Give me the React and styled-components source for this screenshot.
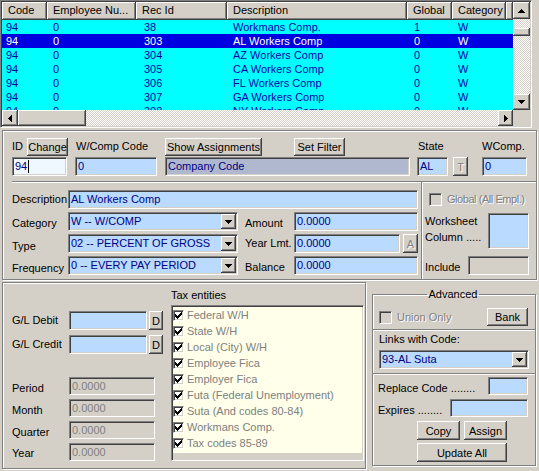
import React from "react";
import styled, { createGlobalStyle, css } from "styled-components";

const GlobalStyle = createGlobalStyle`
  html, body {
    margin: 0;
    padding: 0;
    background: #d4d0c8;
  }
  body {
    font-family: "Liberation Sans", Arial, sans-serif;
    font-size: 11px;
    color: #000;
  }
`;

const raised = css`
  background: #d4d0c8;
  box-shadow: inset -1px -1px #404040, inset 1px 1px #fff,
    inset -2px -2px #808080;
`;

const sunken = css`
  border: 1px solid;
  border-color: #808080 #fff #fff #808080;
  box-shadow: inset 1px 1px #404040, inset -1px -1px #d4d0c8;
`;

const checker = css`
  background-color: #fff;
  background-image: repeating-conic-gradient(#d4d0c8 0 25%, #fff 0 50%);
  background-size: 2px 2px;
`;

const Window = styled.div`
  width: 539px;
  height: 471px;
  overflow: hidden;
  display: flex;
  flex-direction: column;
  background: #d4d0c8;
`;

/* ---------- data grid ---------- */

const GridFrame = styled.div`
  box-sizing: border-box;
  width: 532px;
  height: 128px;
  padding: 1px;
  ${sunken};
  display: grid;
  grid-template-columns: 511px 17px;
  grid-template-rows: 108px 16px;
`;

const TableArea = styled.div`
  overflow: hidden;
  background: #00ffff;
`;

const HeaderRow = styled.div`
  display: flex;
  height: 18px;
  background: #d4d0c8;
`;

const HeaderCell = styled.div`
  box-sizing: border-box;
  flex: none;
  width: ${(p) => p.$w}px;
  height: 18px;
  padding-left: 6px;
  line-height: 17px;
  white-space: nowrap;
  overflow: hidden;
  ${raised};
`;

const DataRow = styled.div`
  display: flex;
  height: 14px;
  line-height: 14px;
  background: ${(p) => (p.$selected ? "#0000e0" : "#00ffff")};
  color: ${(p) => (p.$selected ? "#fff" : "#0000a8")};
`;

const DataCell = styled.div`
  flex: none;
  box-sizing: border-box;
  width: ${(p) => p.$w}px;
  padding-left: ${(p) => p.$pl || 6}px;
  white-space: nowrap;
  overflow: hidden;
`;

const VScroll = styled.div`
  display: flex;
  flex-direction: column;
`;

const HScroll = styled.div`
  display: flex;
`;

const ScrollBtn = styled.div`
  box-sizing: border-box;
  flex: none;
  width: ${(p) => p.$w || 17}px;
  height: ${(p) => p.$h || 16}px;
  display: flex;
  align-items: center;
  justify-content: center;
  ${raised};
`;

const Thumb = styled.div`
  flex: none;
  width: ${(p) => (p.$w ? `${p.$w}px` : "auto")};
  height: ${(p) => (p.$h ? `${p.$h}px` : "auto")};
  ${raised};
`;

const Track = styled.div`
  flex: ${(p) => (p.$size ? `0 0 ${p.$size}px` : "1")};
  ${checker};
`;

const Corner = styled.div`
  background: #d4d0c8;
`;

/* ---------- panels ---------- */

const etched = css`
  border: 1px solid #808080;
  box-shadow: inset 1px 1px #fff, 1px 1px #fff;
`;

const MidPanel = styled.div`
  box-sizing: border-box;
  width: 535px;
  height: 150px;
  margin: 2px 0 0 2px;
  ${etched};
  display: flex;
  flex-direction: column;
`;

const TopArea = styled.div`
  box-sizing: border-box;
  height: 50px;
  padding: 6px 0 0 9px;
  display: flex;
  align-items: flex-start;
`;

const Group = styled.div`
  display: flex;
  flex-direction: column;
  margin-left: ${(p) => p.$ml || 0}px;
`;

const TopRow = styled.div`
  display: flex;
  align-items: center;
  height: 19px;
  margin-bottom: 1px;
`;

const LowerArea = styled.div`
  flex: 1;
  margin-left: 9px;
  display: flex;
  border-top: 1px solid #808080;
  box-shadow: inset 0 1px #fff;
`;

const LowerLeft = styled.div`
  width: 409px;
  padding-top: 8px;
  display: flex;
  flex-direction: column;
`;

const LowerRight = styled.div`
  flex: 1;
  min-width: 0;
  padding: 11px 0 0 3px;
  border-left: 1px solid #808080;
  box-shadow: inset 1px 1px #fff;
  display: flex;
  flex-direction: column;
`;

const FormRow = styled.div`
  display: flex;
  align-items: ${(p) => p.$align || "center"};
  height: ${(p) => (p.$h ? `${p.$h}px` : "auto")};
  margin-top: ${(p) => p.$mt || 0}px;
  margin-left: ${(p) => p.$ml || 0}px;
`;

const Spacer = styled.div`
  flex: 1;
`;

const Label = styled.span`
  flex: none;
  width: ${(p) => (p.$w ? `${p.$w}px` : "auto")};
  margin-left: ${(p) => p.$ml || 0}px;
  padding-top: ${(p) => (p.$dy || 0) * 2}px;
  white-space: nowrap;
  line-height: ${(p) => p.$lh || 13}px;
  letter-spacing: ${(p) => p.$ls || 0}px;
  color: ${(p) => (p.$disabled ? "#808080" : "#000")};
  text-shadow: ${(p) => (p.$disabled ? "1px 1px #fff" : "none")};
`;

const Field = styled.div`
  box-sizing: border-box;
  flex: none;
  width: ${(p) => p.$w}px;
  height: ${(p) => p.$h || 19}px;
  margin-left: ${(p) => p.$ml || 0}px;
  padding: 1px 1px 1px 2px;
  ${sunken};
  background: ${(p) => p.$bg || "#badaff"};
  color: ${(p) => p.$fg || "#000080"};
  line-height: ${(p) => (p.$h || 19) - 4}px;
  white-space: nowrap;
  overflow: hidden;
  display: flex;
  align-items: center;
`;

const FieldText = styled.span`
  flex: 1;
  overflow: hidden;
`;

const Caret = styled.span`
  display: inline-block;
  width: 1px;
  height: 13px;
  background: #000;
  margin-left: 1px;
`;

const DropBtn = styled.div`
  box-sizing: border-box;
  flex: none;
  width: 15px;
  height: 15px;
  display: flex;
  align-items: center;
  justify-content: center;
  ${raised};
`;

const Button = styled.div`
  box-sizing: border-box;
  flex: none;
  width: ${(p) => p.$w}px;
  height: ${(p) => p.$h || 18}px;
  margin-left: ${(p) => p.$ml || 0}px;
  display: flex;
  align-items: center;
  justify-content: center;
  white-space: nowrap;
  color: ${(p) => (p.$disabled ? "#808080" : "#000")};
  text-shadow: ${(p) => (p.$disabled ? "1px 1px #fff" : "none")};
  ${raised};
`;

const CheckBox = styled.span`
  box-sizing: border-box;
  flex: none;
  width: ${(p) => p.$size || 13}px;
  height: ${(p) => p.$size || 13}px;
  margin-left: ${(p) => p.$ml || 0}px;
  ${sunken};
  background: ${(p) => p.$bg || "#fff"};
  display: flex;
  align-items: center;
  justify-content: center;
`;

/* ---------- bottom ---------- */

const BottomArea = styled.div`
  display: flex;
  margin-top: 2px;
  height: 187px;
`;

const BottomLeft = styled.div`
  box-sizing: border-box;
  width: 364px;
  height: 187px;
  margin-left: 2px;
  ${etched};
  display: flex;
`;

const GLColumn = styled.div`
  width: 152px;
  padding: 28px 0 0 9px;
  display: flex;
  flex-direction: column;
`;

const TaxColumn = styled.div`
  margin-left: 7px;
  padding-top: 6px;
  display: flex;
  flex-direction: column;
`;

const ListBox = styled.div`
  box-sizing: border-box;
  width: 193px;
  height: 156px;
  margin-top: 3px;
  padding: 1px;
  ${sunken};
  background: #ffffea;
  display: flex;
  flex-direction: column;
`;

const ListItem = styled.div`
  display: flex;
  align-items: center;
  height: 16px;
  white-space: nowrap;
`;

const ListText = styled.span`
  margin-left: 3px;
  line-height: 16px;
  color: #808080;
`;

const ListFiller = styled.div`
  flex: 1;
  margin-top: 2px;
  background: #d4d0c8;
`;

const RightStack = styled.div`
  width: 164px;
  margin-left: 6px;
  padding-top: 6px;
  display: flex;
  flex-direction: column;
`;

const GroupBox = styled.fieldset`
  box-sizing: border-box;
  margin: 0;
  padding: 7px 7px 3px 5px;
  min-inline-size: 0;
  border: 1px solid #808080;
  box-shadow: inset 1px 1px #fff, 1px 1px #fff;
  display: flex;
  align-items: center;
`;

const GroupTitle = styled.legend`
  margin: 0 auto;
  padding: 0 2px;
  line-height: 13px;
`;

const SidePanel = styled.div`
  box-sizing: border-box;
  height: ${(p) => p.$h}px;
  border: 1px solid #808080;
  border-top: 0;
  box-shadow: inset 1px 0 #fff, 1px 1px #fff;
  padding: ${(p) => p.$pad};
  display: flex;
  flex-direction: column;
`;

/* ---------- glyphs ---------- */

const Arrow = ({ dir }) => {
  const rects =
    dir === "up"
      ? [[3, 0, 1, 1], [2, 1, 3, 1], [1, 2, 5, 1], [0, 3, 7, 1]]
      : dir === "down"
      ? [[0, 0, 7, 1], [1, 1, 5, 1], [2, 2, 3, 1], [3, 3, 1, 1]]
      : dir === "left"
      ? [[0, 3, 1, 1], [1, 2, 1, 3], [2, 1, 1, 5], [3, 0, 1, 7]]
      : [[0, 0, 1, 7], [1, 1, 1, 5], [2, 2, 1, 3], [3, 3, 1, 1]];
  const vertical = dir === "up" || dir === "down";
  return (
    <svg
      width={vertical ? 7 : 4}
      height={vertical ? 4 : 7}
      shapeRendering="crispEdges"
    >
      {rects.map(([x, y, w, h], i) => (
        <rect key={i} x={x} y={y} width={w} height={h} fill="#000" />
      ))}
    </svg>
  );
};

const Check = () => (
  <svg width="7" height="7" shapeRendering="crispEdges">
    {[2, 3, 4, 3, 2, 1, 0].map((y, x) => (
      <rect key={x} x={x} y={y} width="1" height="3" fill="#000" />
    ))}
  </svg>
);

const Combo = ({ w, value }) => (
  <Field $w={w}>
    <FieldText>{value}</FieldText>
    <DropBtn>
      <Arrow dir="down" />
    </DropBtn>
  </Field>
);

/* ---------- data ---------- */

const COLUMNS = [
  { title: "Code", w: 45, pl: 4 },
  { title: "Employee Nu...", w: 89 },
  { title: "Rec Id", w: 91, pl: 8 },
  { title: "Description", w: 180 },
  { title: "Global", w: 45, pl: 7 },
  { title: "Category", w: 54 },
];

const ROWS = [
  ["94", "0", "38", "Workmans Comp.", "1", "W"],
  ["94", "0", "303", "AL Workers Comp", "0", "W"],
  ["94", "0", "304", "AZ Workers Comp", "0", "W"],
  ["94", "0", "305", "CA Workers Comp", "0", "W"],
  ["94", "0", "306", "FL Workers Comp", "0", "W"],
  ["94", "0", "307", "GA Workers Comp", "0", "W"],
  ["94", "0", "308", "NY Workers Comp", "0", "W"],
];

const TAX_ENTITIES = [
  "Federal W/H",
  "State W/H",
  "Local (City) W/H",
  "Employee Fica",
  "Employer Fica",
  "Futa (Federal Unemployment)",
  "Suta (And codes 80-84)",
  "Workmans Comp.",
  "Tax codes 85-89",
];

const TOTALS = [
  { label: "Period", dy: 2 },
  { label: "Month", dy: 2 },
  { label: "Quarter", dy: 2 },
  { label: "Year", dy: 1 },
];

const App = () => {
  return (
    <Window>
      <GlobalStyle />

      <GridFrame>
        <TableArea>
          <HeaderRow>
            {COLUMNS.map((c) => (
              <HeaderCell key={c.title} $w={c.w}>
                {c.title}
              </HeaderCell>
            ))}
            <HeaderCell $w={7} />
          </HeaderRow>
          {ROWS.map((r, i) => (
            <DataRow key={i} $selected={i === 1}>
              {r.map((v, j) => (
                <DataCell key={j} $w={COLUMNS[j].w} $pl={COLUMNS[j].pl}>
                  {v}
                </DataCell>
              ))}
            </DataRow>
          ))}
        </TableArea>
        <VScroll>
          <ScrollBtn $h={17}>
            <Arrow dir="up" />
          </ScrollBtn>
          <Track $size={9} />
          <Thumb $h={8} />
          <Track />
          <ScrollBtn $h={16}>
            <Arrow dir="down" />
          </ScrollBtn>
        </VScroll>
        <HScroll>
          <ScrollBtn $w={16}>
            <Arrow dir="left" />
          </ScrollBtn>
          <Thumb $w={68} />
          <Track />
          <ScrollBtn $w={15}>
            <Arrow dir="right" />
          </ScrollBtn>
        </HScroll>
        <Corner />
      </GridFrame>

      <MidPanel>
        <TopArea>
          <Group>
            <TopRow>
              <Label $w={15}>ID</Label>
              <Button $w={41}>Change</Button>
            </TopRow>
            <Field $w={55} $bg="#f0f8ff">
              94
              <Caret />
            </Field>
          </Group>
          <Group $ml={7}>
            <TopRow>
              <Label $ml={1}>W/Comp Code</Label>
            </TopRow>
            <Field $w={82}>0</Field>
          </Group>
          <Group $ml={8}>
            <TopRow>
              <Button $w={97}>Show Assignments</Button>
              <Button $w={51} $ml={32}>
                Set Filter
              </Button>
            </TopRow>
            <Field $w={245} $bg="#b0b8d0">
              Company Code
            </Field>
          </Group>
          <Group $ml={7}>
            <TopRow>
              <Label $ml={1}>State</Label>
            </TopRow>
            <FormRow>
              <Field $w={31}>AL</Field>
              <Button $w={15} $h={19} $ml={5} $disabled>
                T
              </Button>
            </FormRow>
          </Group>
          <Group $ml={14}>
            <TopRow>
              <Label>WComp.</Label>
            </TopRow>
            <Field $w={45}>0</Field>
          </Group>
        </TopArea>

        <LowerArea>
          <LowerLeft>
            <FormRow>
              <Label $w={56}>Description</Label>
              <Field $w={350}>AL Workers Comp</Field>
            </FormRow>
            <FormRow $mt={3}>
              <Label $w={56} $dy={2}>
                Category
              </Label>
              <Combo w={170} value="W -- W/COMP" />
              <Label $w={49} $ml={7} $dy={2}>
                Amount
              </Label>
              <Field $w={124}>0.0000</Field>
            </FormRow>
            <FormRow $mt={3}>
              <Label $w={56} $dy={3}>
                Type
              </Label>
              <Combo w={170} value="02 -- PERCENT OF GROSS" />
              <Label $w={49} $ml={7}>
                Year Lmt.
              </Label>
              <Field $w={106}>0.0000</Field>
              <Button $w={15} $h={19} $ml={3} $disabled>
                A
              </Button>
            </FormRow>
            <FormRow $mt={3}>
              <Label $w={56} $dy={3}>
                Frequency
              </Label>
              <Combo w={170} value="0 -- EVERY PAY PERIOD" />
              <Label $w={49} $ml={7} $dy={2}>
                Balance
              </Label>
              <Field $w={124}>0.0000</Field>
            </FormRow>
          </LowerLeft>

          <LowerRight>
            <FormRow>
              <CheckBox $ml={4} $bg="#d4d0c8" />
              <Label $ml={5} $ls={-0.45} $disabled>
                Global (All Empl.)
              </Label>
            </FormRow>
            <FormRow $mt={7} $align="flex-start">
              <Label $w={63} $lh={16}>
                Worksheet
                <br />
                Column .....
              </Label>
              <Field $w={41} $h={36} />
            </FormRow>
            <FormRow $mt={7}>
              <Label $w={43} $dy={2}>
                Include
              </Label>
              <Field $w={61} $bg="#d4d0c8" />
            </FormRow>
          </LowerRight>
        </LowerArea>
      </MidPanel>

      <BottomArea>
        <BottomLeft>
          <GLColumn>
            <FormRow>
              <Label $w={57}>G/L Debit</Label>
              <Field $w={78} />
              <Button $w={14} $h={19} $ml={2}>
                D
              </Button>
            </FormRow>
            <FormRow $mt={5}>
              <Label $w={57}>G/L Credit</Label>
              <Field $w={78} />
              <Button $w={14} $h={19} $ml={2}>
                D
              </Button>
            </FormRow>
            {TOTALS.map((t, i) => (
              <FormRow key={t.label} $mt={i === 0 ? 23 : 4}>
                <Label $w={57} $dy={t.dy}>
                  {t.label}
                </Label>
                <Field $w={86} $h={18} $bg="#d4d0c8" $fg="#808080">
                  0.0000
                </Field>
              </FormRow>
            ))}
          </GLColumn>

          <TaxColumn>
            <Label>Tax entities</Label>
            <ListBox>
              {TAX_ENTITIES.map((t) => (
                <ListItem key={t}>
                  <CheckBox $size={11}>
                    <Check />
                  </CheckBox>
                  <ListText>{t}</ListText>
                </ListItem>
              ))}
              <ListFiller />
            </ListBox>
          </TaxColumn>
        </BottomLeft>

        <RightStack>
          <GroupBox>
            <GroupTitle>Advanced</GroupTitle>
            <CheckBox $ml={1} $bg="#d4d0c8" />
            <Label $ml={5} $disabled>
              Union Only
            </Label>
            <Spacer />
            <Button $w={41}>Bank</Button>
          </GroupBox>

          <SidePanel $h={44} $pad="3px 6px 0 6px">
            <Label>Links with Code:</Label>
            <FormRow $mt={4}>
              <Combo w={150} value="93-AL Suta" />
            </FormRow>
          </SidePanel>

          <SidePanel $h={92} $pad="3px 7px 0 5px">
            <FormRow>
              <Label $w={110} $dy={2}>
                Replace Code ........
              </Label>
              <Field $w={40} $h={18} />
            </FormRow>
            <FormRow $mt={4}>
              <Label $w={72} $dy={2}>
                Expires ........
              </Label>
              <Field $w={78} $h={18} />
            </FormRow>
            <FormRow $mt={4} $ml={39}>
              <Button $w={43} $h={19}>
                Copy
              </Button>
              <Button $w={43} $h={19} $ml={4}>
                Assign
              </Button>
            </FormRow>
            <FormRow $mt={3} $ml={39}>
              <Button $w={90} $h={19}>
                Update All
              </Button>
            </FormRow>
          </SidePanel>
        </RightStack>
      </BottomArea>
    </Window>
  );
};

export default App;
